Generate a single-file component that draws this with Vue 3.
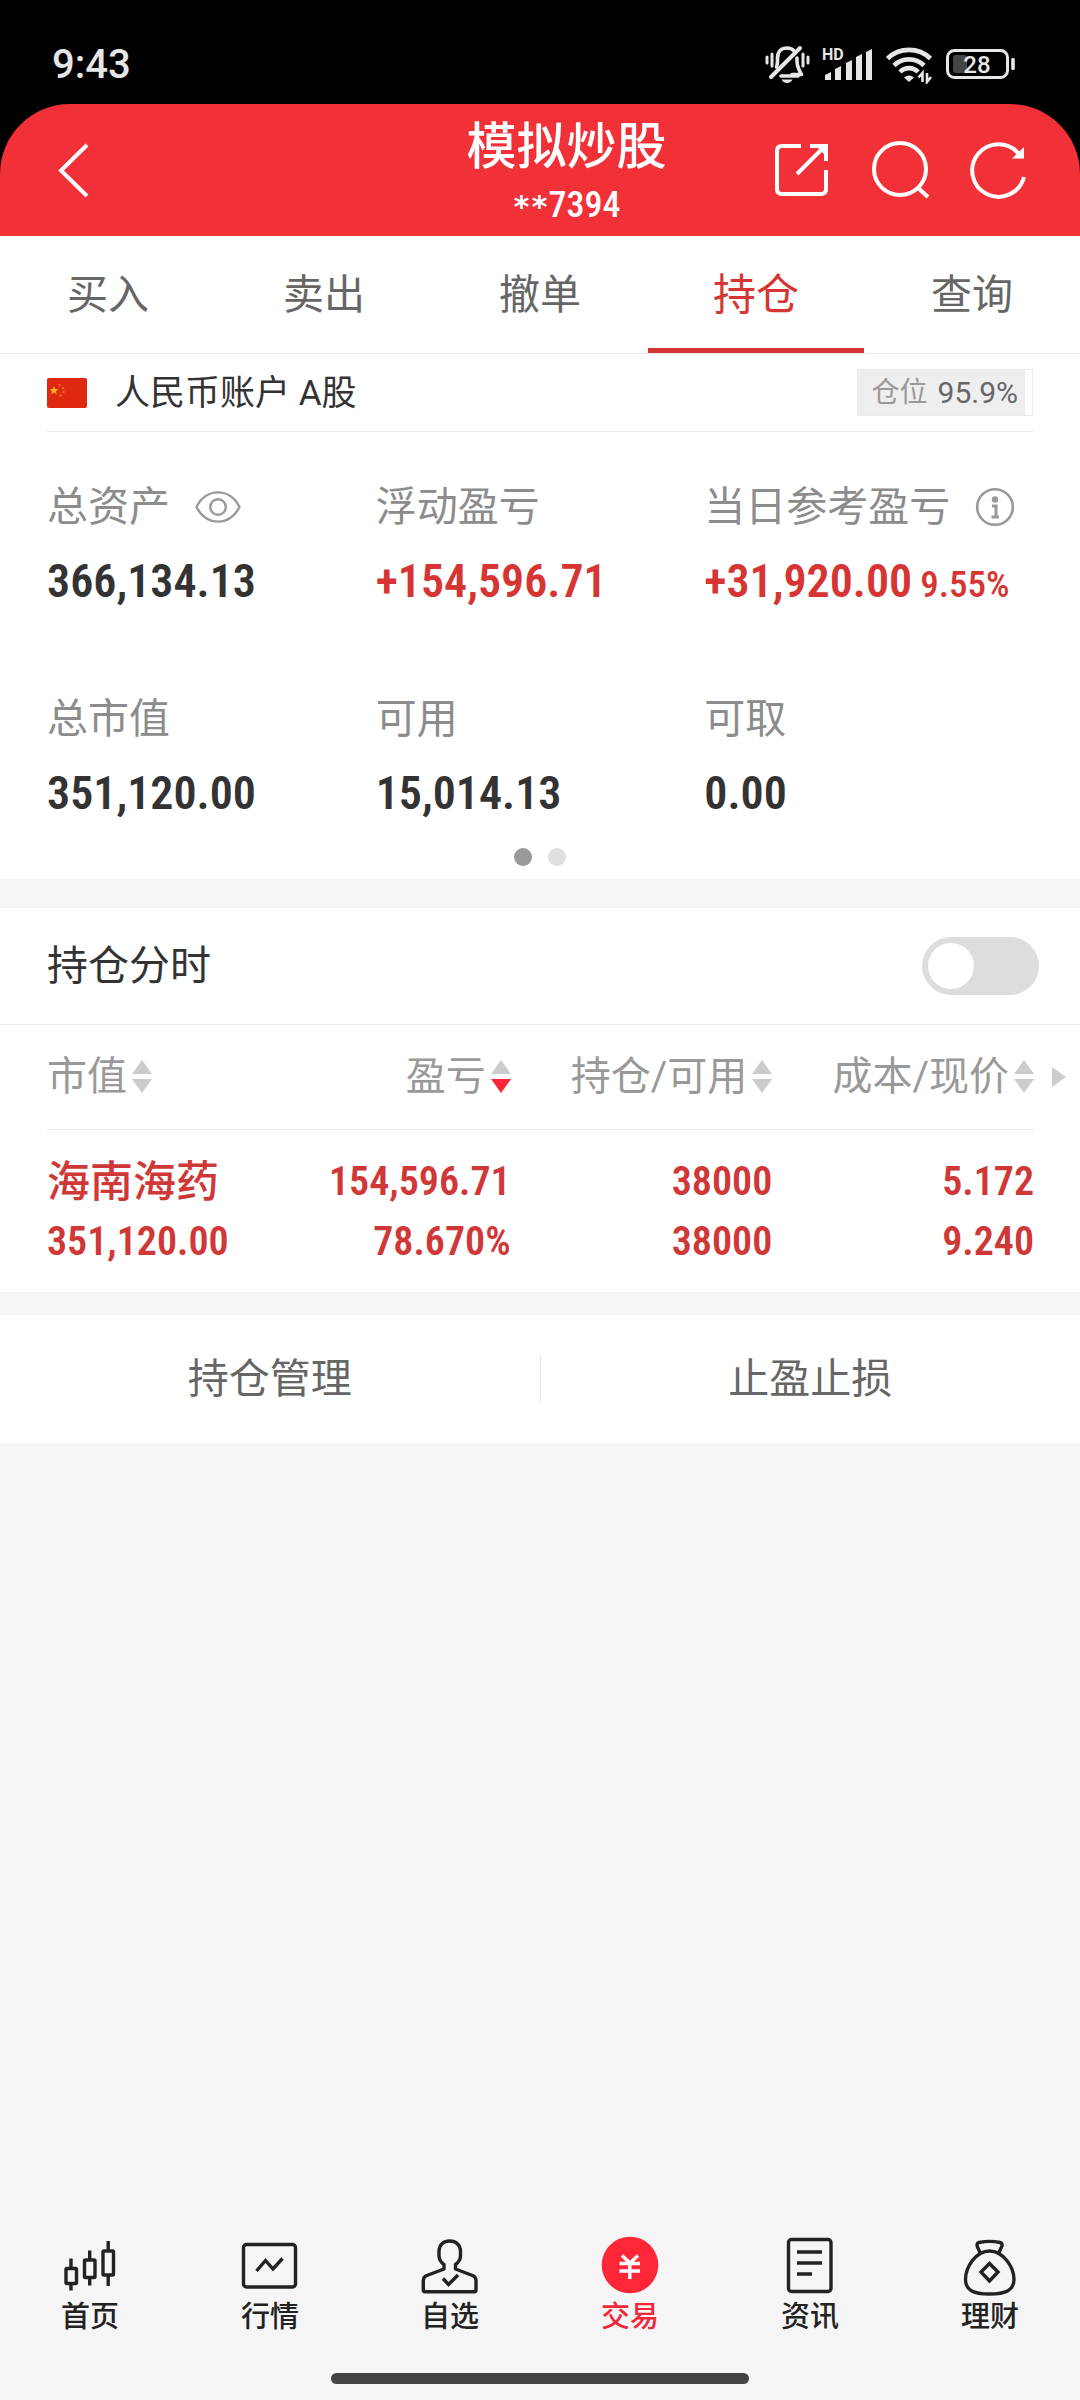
<script setup>
import { ref } from 'vue'

const tabs = ['买入', '卖出', '撤单', '持仓', '查询']
const activeTab = ref('持仓')

const position = 95.9
const stats = [
  { label: '总资产', value: '366,134.13', icon: 'eye' },
  { label: '浮动盈亏', value: '+154,596.71', up: true },
  { label: '当日参考盈亏', value: '+31,920.00', rate: '9.55%', up: true, icon: 'info' },
  { label: '总市值', value: '351,120.00' },
  { label: '可用', value: '15,014.13' },
  { label: '可取', value: '0.00' },
]

const intraday = ref(false)
const columns = ['市值', '盈亏', '持仓/可用', '成本/现价']
const sorted = ref('盈亏')
const holdings = [
  {
    name: '海南海药',
    market: '351,120.00',
    cells: [
      ['154,596.71', '78.670%'],
      ['38000', '38000'],
      ['5.172', '9.240'],
    ],
  },
]

const navItems = [
  { label: '首页', icon: 'home' },
  { label: '行情', icon: 'quote' },
  { label: '自选', icon: 'watch' },
  { label: '交易', icon: 'trade' },
  { label: '资讯', icon: 'news' },
  { label: '理财', icon: 'wealth' },
]
const activeNav = ref('交易')
</script>

<template>
  <div class="app">
    <div class="top">
      <div class="status">
        <time class="clock">9:43</time>
        <div class="status-icons">
          <svg width="46" height="40" viewBox="0 0 46 40" fill="none" stroke="#e6e6e6" stroke-linecap="round">
            <path d="M3 13v6M8 10v12M39 10v12M44 13v6" stroke-width="3" />
            <path d="M34 32H17M12.500 23c.7-2 1-3.500 1-6v-3C13.500 8 17 4 23 4c3 0 5.500 1 7 3" stroke-width="3.600" />
            <path d="M33 14v3c0 6 2 9 4.500 13.500H28" stroke-width="3.600" stroke-linejoin="round" />
            <path d="M7 33L36 4" stroke-width="4" />
            <path d="M17.500 35.500h11c-1 2-3 3.500-5.500 3.500s-4.500-1.500-5.500-3.500z" fill="#e6e6e6" stroke="none" />
          </svg>
          <svg width="52" height="40" viewBox="0 0 52 40" fill="#e6e6e6">
            <text x="0" y="16" class="hd">HD</text>
            <path d="M3 36v-5l6-3v8zM13 36V25l6-3v14zM24 36V19l6-3v20zM34 36V13l6-3v26zM44 36V8l6-3v31z" />
          </svg>
          <svg width="48" height="40" viewBox="0 0 48 40" fill="none" stroke="#e6e6e6" stroke-width="4.600">
            <path d="M1.500 14.500a31 31 0 0 1 43 0M8 21.500a21.500 21.500 0 0 1 30 0M14 28a12.500 12.500 0 0 1 18 0" />
            <path d="M18 33.500q5-4 10 0l-5 4.500z" fill="#e6e6e6" stroke="none" />
            <path d="M36 38v-9M40.500 31v9" stroke="#000" stroke-width="7" />
            <path d="M36.500 38v-9l-4 4.500M41 29v9l4-5" stroke-width="2.600" />
          </svg>
          <svg width="70" height="40" viewBox="0 0 70 40" fill="none">
            <rect x="1.500" y="6.500" width="60" height="27" rx="7" stroke="#e6e6e6" stroke-width="3" />
            <rect x="7" y="11" width="14" height="18" rx="3" fill="#444" />
            <path d="M67 15.500v9" stroke="#e6e6e6" stroke-width="3.600" stroke-linecap="round" />
            <text x="31" y="28.500" text-anchor="middle" class="battery">28</text>
          </svg>
        </div>
      </div>

      <header class="header">
        <button class="icon-btn back" aria-label="返回">
          <svg width="42" height="60" viewBox="0 0 42 60" fill="none" stroke="#fff" stroke-width="4">
            <path d="M35 5L9 30.500 35 56" />
          </svg>
        </button>
        <div class="heading">
          <h1 class="title">模拟炒股</h1>
          <p class="account-no"><span class="mask">**</span>7394</p>
        </div>
        <div class="actions">
          <button class="icon-btn" aria-label="分享">
            <svg width="60" height="60" viewBox="0 0 60 60" fill="none" stroke="#fff" stroke-width="4">
              <path d="M30 6H11q-5 0-5 5v38q0 5 5 5h39q5 0 5-5V30M39 6h16v15M26 34L53 7" />
              <path d="M45 6h10v10z" fill="#fff" stroke="none" />
            </svg>
          </button>
          <button class="icon-btn" aria-label="搜索">
            <svg width="60" height="60" viewBox="0 0 60 60" fill="none" stroke="#fff" stroke-width="4">
              <circle cx="30" cy="29" r="26" />
              <path d="M47 47l11 10" />
            </svg>
          </button>
          <button class="icon-btn" aria-label="刷新">
            <svg width="60" height="60" viewBox="0 0 60 60" fill="none" stroke="#fff" stroke-width="4">
              <path d="M55 37A26.300 26.300 0 1 1 50 14" />
              <path d="M55 7v11.500H43z" fill="#fff" stroke="none" />
            </svg>
          </button>
        </div>
      </header>
    </div>

    <nav class="tabs">
      <button
        v-for="tab in tabs"
        :key="tab"
        class="tab"
        :class="{ active: tab === activeTab }"
        @click="activeTab = tab"
      >
        {{ tab }}
      </button>
    </nav>

    <section class="card summary">
      <div class="account">
        <svg class="flag" width="40" height="30" viewBox="0 0 40 30">
          <rect width="40" height="30" rx="2" fill="#de2910" />
          <path d="M7 8l1.200 3 3.100.200-2.400 2 .800 3.100L7 14.600l-2.700 1.700.8-3.100-2.400-2 3.100-.2z" fill="#ffb71c" />
          <g fill="#f26a2a">
            <circle cx="12.500" cy="7" r="1.200" />
            <circle cx="16" cy="10" r="1.200" />
            <circle cx="16.500" cy="14" r="1.200" />
            <circle cx="13.500" cy="17.500" r="1.200" />
          </g>
        </svg>
        <span class="account-name">人民币账户 A股</span>
        <div class="position">
          <div class="position-fill" :style="{ width: position + '%' }"></div>
          <span class="position-label">仓位</span>
          <span class="position-value">{{ position }}%</span>
        </div>
      </div>

      <dl class="stats">
        <div v-for="item in stats" :key="item.label" class="stat">
          <dt class="stat-label">
            {{ item.label }}
            <svg v-if="item.icon === 'eye'" width="46" height="40" viewBox="0 0 46 40" fill="none" stroke="#999" stroke-width="2.400">
              <path d="M1.500 20C11 .500 35 .500 44.500 20 35 39.500 11 39.500 1.500 20z" stroke-linejoin="round" />
              <circle cx="23" cy="20" r="7.800" />
            </svg>
            <svg v-if="item.icon === 'info'" width="40" height="40" viewBox="0 0 40 40" fill="none" stroke="#999">
              <circle cx="20" cy="20" r="17.800" stroke-width="2.600" />
              <circle cx="20" cy="12.500" r="3.200" fill="#999" stroke="none" />
              <path d="M17 19h4v11M16.500 30h7.500" stroke-width="3" />
            </svg>
          </dt>
          <dd class="stat-value num" :class="{ up: item.up }">
            {{ item.value }}<small v-if="item.rate" class="rate">{{ item.rate }}</small>
          </dd>
        </div>
      </dl>

      <div class="dots">
        <i class="dot on"></i>
        <i class="dot"></i>
      </div>
    </section>

    <section class="card holdings">
      <div class="switch-row">
        <label for="intraday">持仓分时</label>
        <input id="intraday" v-model="intraday" type="checkbox" role="switch" class="switch" />
      </div>

      <div class="table-wrap">
        <table class="table">
          <thead>
            <tr>
              <th v-for="col in columns" :key="col" scope="col">
                <button class="sort" @click="sorted = col">
                  {{ col }}
                  <svg width="20" height="34" viewBox="0 0 20 34">
                    <path d="M10 0l10 14H0z" fill="#ccc" />
                    <path d="M0 19h20L10 33z" :fill="col === sorted ? '#ff2638' : '#ccc'" />
                  </svg>
                </button>
              </th>
            </tr>
          </thead>
          <tbody>
            <tr v-for="row in holdings" :key="row.name">
              <td>
                <div class="line name">{{ row.name }}</div>
                <div class="line num">{{ row.market }}</div>
              </td>
              <td v-for="(cell, i) in row.cells" :key="i">
                <div v-for="(value, j) in cell" :key="j" class="line num">{{ value }}</div>
              </td>
            </tr>
          </tbody>
        </table>
        <svg class="more" width="14" height="20" viewBox="0 0 14 20"><path d="M0 0l14 10L0 20z" fill="#ccc" /></svg>
      </div>
    </section>

    <section class="card manage">
      <button class="manage-btn">持仓管理</button>
      <button class="manage-btn">止盈止损</button>
    </section>

    <footer class="bottom">
      <nav class="nav">
        <a
          v-for="item in navItems"
          :key="item.label"
          href="#"
          class="nav-item"
          :class="{ active: item.label === activeNav }"
          @click.prevent="activeNav = item.label"
        >
          <svg width="60" height="62" viewBox="0 0 60 62" fill="none" stroke="#222" stroke-width="3.400" stroke-linejoin="round">
            <g v-if="item.icon === 'home'">
              <rect x="6" y="33.500" width="10.500" height="15" rx="1" />
              <rect x="24.500" y="25" width="10.500" height="17.500" rx="1" />
              <rect x="43" y="16" width="10.500" height="24" rx="1" />
              <path d="M11 23.500v9M11 49v6.500M29.700 15.500v9M29.700 43v7.500M48.200 6v9.500M48.200 41v10" />
            </g>
            <g v-else-if="item.icon === 'quote'">
              <rect x="3.500" y="9.500" width="52" height="42.500" rx="3" />
              <path d="M16.500 36l9-10.500L33 34l9.500-10.500" stroke-linejoin="miter" />
            </g>
            <g v-else-if="item.icon === 'watch'">
              <path d="M24 34v-4.500c-3.500-2.500-5-5.500-5-9V16.500C19 10 23.500 6 29.700 6S40.500 10 40.500 16.500v4c0 3.500-1.500 6.500-5 9V34l17 6.500c2.500 1 3.500 2.500 3.500 5V55c0 1-.5 1.700-1.700 1.700H5c-1.200 0-1.700-.7-1.700-1.700v-9.500c0-2.500 1-4 3.500-5z" />
              <path d="M23 43.500l5.500 6L38 40" stroke-linejoin="miter" />
            </g>
            <g v-else-if="item.icon === 'trade'" stroke="#fff">
              <circle cx="30" cy="30" r="28.300" fill="#ff2638" stroke="none" />
              <path d="M22 20.500l8 7.500 8-7.500M19.500 28.500h20.500M19.500 36h20.500M29.800 28v16" />
            </g>
            <g v-else-if="item.icon === 'news'">
              <rect x="8.500" y="4.500" width="42.500" height="52" rx="3" />
              <path d="M17 17h25M17 28h25M17 39h15" />
            </g>
            <g v-else>
              <path d="M29.500 16C16 16 5.500 32 5.500 44.500 5.500 55 13 59 29.500 59S54 55 54 44.500C54 32 43 16 29.500 16z" />
              <path d="M20.500 18.500L17.500 12c-1-2.500-.5-4 1.500-4.500 6-1.300 15-1.300 21 0 2 .5 2.800 2 1.500 4.500L38.500 18.500" />
              <path d="M29.500 28.500l8.500 8.500-8.500 9-8.500-9z" stroke-linejoin="miter" />
            </g>
          </svg>
          <span>{{ item.label }}</span>
        </a>
      </nav>
      <div class="home-bar"></div>
    </footer>
  </div>
</template>

<style>
body {
  background: #f5f5f5;
}
</style>

<style scoped>
.app {
  display: flex;
  flex-direction: column;
  min-height: 100vh;
  background: #f5f5f5;
  color: #333;
  font-family: Roboto, 'Noto Sans CJK SC', sans-serif;
  font-size: 41px;
  line-height: 60px;
}

button {
  padding: 0;
  border: 0;
  background: none;
  color: inherit;
  font: inherit;
}

svg {
  display: block;
  flex: none;
}

.num {
  font-family: 'Roboto Condensed', 'Liberation Sans Narrow', Roboto, sans-serif;
  font-weight: 600;
}

.top {
  background: #000;
}

.status {
  display: flex;
  align-items: center;
  justify-content: space-between;
  height: 104px;
  padding: 24px 64px 0 52px;
  box-sizing: border-box;
  color: #e6e6e6;
}

.clock {
  padding-top: 2px;
  font-size: 40px;
  font-weight: 500;
}

.status-icons {
  display: flex;
  gap: 12px;
}

.hd {
  font: 700 16px Roboto, sans-serif;
}

.battery {
  fill: #e6e6e6;
  font: 500 24px Roboto, sans-serif;
}

.header {
  display: grid;
  grid-template-columns: 1fr auto 1fr;
  align-items: center;
  height: 132px;
  padding: 0 51px 0 52px;
  box-sizing: border-box;
  border-radius: 70px 70px 0 0;
  background: #f13037;
  color: #fff;
}

.heading {
  padding: 8px 0 0 52px;
  text-align: center;
}

.title {
  margin: 0;
  font-size: 50px;
  font-weight: 500;
  line-height: 64px;
}

.account-no {
  margin: 0;
  font: 500 36px/52px 'Roboto Condensed', Roboto, sans-serif;
}

.mask {
  font-family: 'DejaVu Sans Mono', monospace;
  font-size: 30px;
  font-weight: 700;
}

.actions {
  display: flex;
  justify-content: flex-end;
  gap: 39px;
}

.tabs {
  display: flex;
  border-bottom: 1px solid #ebebeb;
  background: #fff;
}

.tab {
  flex: 1;
  height: 117px;
  padding-top: 6px;
  border-bottom: 5px solid transparent;
  color: #666;
}

.tab.active {
  border-bottom-color: #d63533;
  color: #d63533;
  font-size: 43px;
}

.card {
  background: #fff;
}

.summary {
  padding: 0 47px 13px;
}

.account {
  display: flex;
  align-items: center;
  height: 77px;
  border-bottom: 1px solid #ebebeb;
}

.account-name {
  margin-left: 28px;
  padding-top: 2px;
  font-size: 35px;
}

.position {
  position: relative;
  display: flex;
  align-items: center;
  gap: 10px;
  height: 47px;
  margin-left: auto;
  padding: 0 14px;
  box-sizing: border-box;
  border: 1px solid #ebebeb;
}

.position-fill {
  position: absolute;
  inset: 0 auto 0 0;
  background: #eee;
}

.position-label,
.position-value {
  position: relative;
}

.position-label {
  color: #999;
  font-size: 28px;
}

.position-value {
  color: #666;
  font-size: 30px;
}

.stats {
  display: grid;
  grid-template-columns: repeat(3, 1fr);
  row-gap: 78px;
  margin: 0;
  padding-top: 45px;
}

.stat-label {
  display: flex;
  align-items: center;
  gap: 25px;
  height: 60px;
  color: #8c8c8c;
  white-space: nowrap;
}

.stat-value {
  height: 60px;
  margin: 14px 0 0;
  font-size: 46px;
  white-space: nowrap;
}

.up {
  color: #d63533;
}

.rate {
  margin-left: 8px;
  font-size: 37px;
  font-weight: 500;
}

.dots {
  display: flex;
  justify-content: center;
  gap: 16px;
  margin-top: 25px;
}

.dot {
  width: 18px;
  height: 18px;
  border-radius: 50%;
  background: #e0e0e0;
}

.dot.on {
  background: #999;
}

.holdings {
  margin-top: 29px;
  padding-bottom: 20px;
}

.switch-row {
  display: flex;
  align-items: center;
  justify-content: space-between;
  height: 116px;
  padding: 0 41px 0 47px;
  border-bottom: 1px solid #ebebeb;
}

.switch {
  width: 117px;
  height: 58px;
  margin: 0;
  padding: 6px;
  box-sizing: border-box;
  border-radius: 29px;
  appearance: none;
  background: #ddd;
}

.switch::before {
  content: '';
  display: block;
  width: 46px;
  height: 46px;
  border-radius: 50%;
  background: #fff;
}

.switch:checked {
  background: #d63533;
}

.switch:checked::before {
  margin-left: auto;
}

.table-wrap {
  position: relative;
  padding: 0 46px 0 47px;
}

.table {
  width: 100%;
  border-collapse: collapse;
  table-layout: fixed;
}

th {
  height: 104px;
  padding: 0;
  border-bottom: 1px solid #ebebeb;
  color: #999;
  font-size: 40px;
  font-weight: 400;
  text-align: right;
}

th:first-child {
  width: 202px;
}

.sort {
  display: inline-flex;
  align-items: center;
  gap: 5px;
  white-space: nowrap;
}

th:first-child,
td:first-child {
  text-align: left;
}

td {
  padding: 22px 0 0;
  color: #d03838;
  font-size: 40px;
  text-align: right;
  white-space: nowrap;
}

.name {
  font-size: 43px;
  font-weight: 500;
}

.more {
  position: absolute;
  top: 42px;
  right: 14px;
}

.manage {
  display: flex;
  align-items: center;
  height: 128px;
  margin-top: 23px;
}

.manage-btn {
  flex: 1;
  color: #666;
}

.manage-btn + .manage-btn {
  height: 48px;
  border-left: 1px solid #e6e6e6;
  line-height: 48px;
}

.bottom {
  margin-top: auto;
  padding-bottom: 16px;
}

.nav {
  display: flex;
}

.nav-item {
  display: flex;
  flex: 1;
  flex-direction: column;
  align-items: center;
  gap: 2px;
  color: #222;
  font-size: 29px;
  font-weight: 500;
  line-height: 36px;
  text-decoration: none;
}

.nav-item.active {
  color: #f0283a;
}

.home-bar {
  width: 418px;
  height: 11px;
  margin: 38px auto 0;
  border-radius: 6px;
  background: #444;
}
</style>
